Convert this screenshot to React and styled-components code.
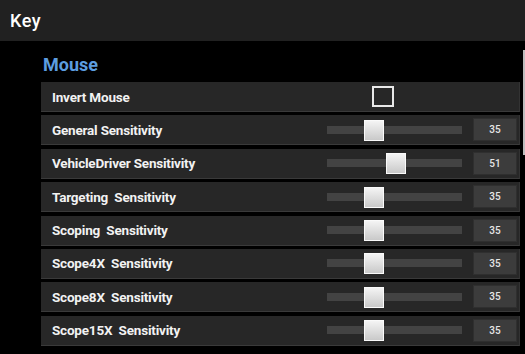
import React from 'react';
import styled, { createGlobalStyle } from 'styled-components';

const GlobalStyle = createGlobalStyle`
  html, body {
    margin: 0;
    padding: 0;
    background: #000;
  }
  body {
    font-family: Roboto, "Liberation Sans", sans-serif;
    width: 525px;
    height: 354px;
    overflow: hidden;
  }
`;

const rows = [
  { label: 'General Sensitivity', value: 35 },
  { label: 'VehicleDriver Sensitivity', value: 51 },
  { label: 'Targeting  Sensitivity', value: 35 },
  { label: 'Scoping  Sensitivity', value: 35 },
  { label: 'Scope4X  Sensitivity', value: 35 },
  { label: 'Scope8X  Sensitivity', value: 35 },
  { label: 'Scope15X  Sensitivity', value: 35 },
];

function Slider({ value }) {
  //thumb position from value (0-100)
  const left = Math.round((value / 100) * 135 - 10);
  return (
    <Track>
      <Thumb style={{ left }} />
    </Track>
  );
}

export default function App() {
  return (
    <Page>
      <GlobalStyle />
      <Header>Key</Header>
      <Content>
        <SectionTitle>Mouse</SectionTitle>
        <List>
          <Row>
            <Label>Invert Mouse</Label>
            <Check />
          </Row>
          {rows.map((r) => (
            <Row key={r.label}>
              <Label>{r.label}</Label>
              <Slider value={r.value} />
              <ValueBox>{r.value}</ValueBox>
            </Row>
          ))}
        </List>
        <ScrollBar />
      </Content>
    </Page>
  );
}

//Styled Component
const Page = styled.div`
  width: 525px;
  height: 354px;
  background: #000;
  display: flex;
  flex-direction: column;
`;

const Header = styled.div`
  height: 41px;
  background: #212121;
  color: #fff;
  font-size: 18px;
  font-weight: 500;
  letter-spacing: 0.5px;
  display: flex;
  align-items: center;
  padding-left: 10px;
  flex-shrink: 0;
`;

const Content = styled.div`
  position: relative;
  flex: 1;
  padding: 10px 5px 0 41px;
`;

const SectionTitle = styled.div`
  color: #5c9de0;
  font-size: 18px;
  font-weight: 700;
  margin-left: 2px;
  height: 31px;
  line-height: 27px;
`;

const List = styled.div`
  display: flex;
  flex-direction: column;
  gap: 3.4px;
`;

const Row = styled.div`
  height: 30px;
  box-sizing: border-box;
  background: #272727;
  border-bottom: 1px solid #3a3a3a;
  border-right: 1px solid #333;
  display: flex;
  align-items: center;
  padding: 0 2px 0 11px;
`;

const Label = styled.div`
  flex: 1;
  color: #f2f2f2;
  font-size: 13.5px;
  font-weight: 700;
  letter-spacing: -0.2px;
  white-space: pre;
`;

const Check = styled.div`
  width: 22px;
  height: 21px;
  box-sizing: border-box;
  border: 2px solid #e8e8e8;
  margin-right: 123px;
`;

const Track = styled.div`
  position: relative;
  width: 135px;
  height: 8px;
  background: #434343;
`;

const Thumb = styled.div`
  position: absolute;
  top: -6px;
  width: 20px;
  height: 21px;
  box-sizing: border-box;
  border: 1px solid #fafafa;
  background: linear-gradient(#f4f4f4, #c9c9c9);
`;

const ValueBox = styled.div`
  width: 44px;
  height: 23px;
  margin-left: 11px;
  box-sizing: border-box;
  background: #3c3c3c;
  border: 1px solid #2f2f2f;
  color: #e6e6e6;
  font-size: 10px;
  font-weight: 500;
  display: flex;
  align-items: center;
  justify-content: center;
`;

const ScrollBar = styled.div`
  position: absolute;
  right: 0;
  top: 9px;
  width: 2px;
  height: 105px;
  background: #bdbdbd;
`;
